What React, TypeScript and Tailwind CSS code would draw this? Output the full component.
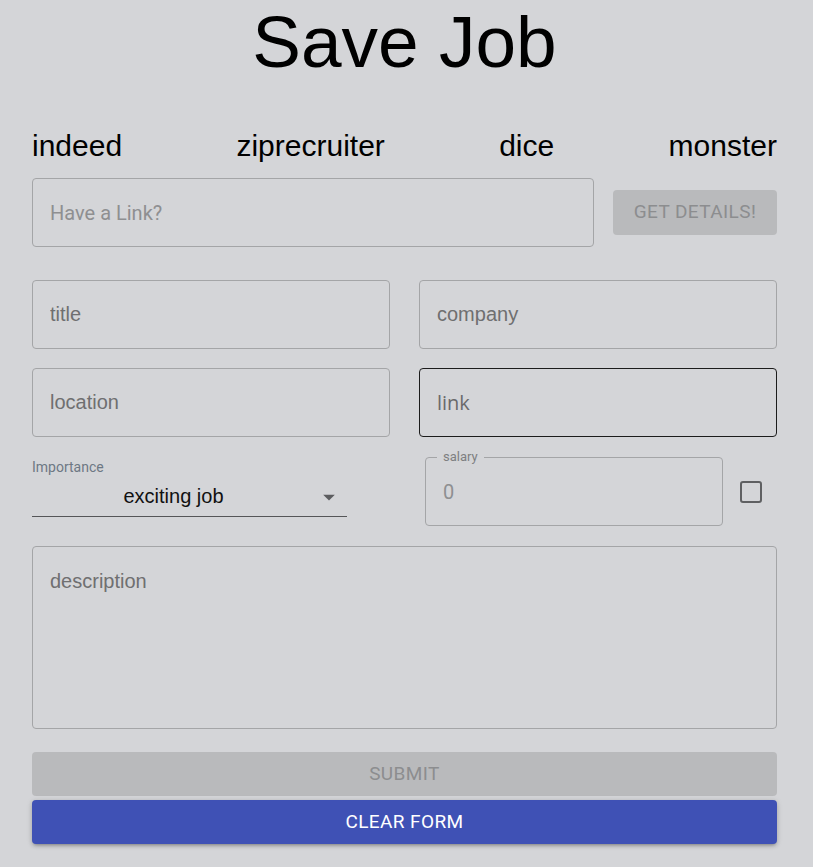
import React from "react";

const arial = "font-['Liberation_Sans',Arial,sans-serif]";
const roboto = "font-['Roboto','Liberation_Sans',sans-serif]";

const boxInput =
  "w-full h-[69px] rounded-[4px] border border-[#a4a5a7] bg-transparent px-[17px] text-[20px] text-[#222] outline-none placeholder:text-[#6f6f70]";

const App = () => {
  return (
    <div className={`min-h-[867px] w-full bg-[#d4d5d8] ${arial}`}>
      <div className="ml-[32px] w-[745px]">
        <h1 className="text-center text-[73px] font-normal leading-[83px] text-black">Save Job</h1>

        <div className="mt-[45px] flex justify-between text-[30px] leading-[35px] text-black">
          <span>indeed</span>
          <span>ziprecruiter</span>
          <span>dice</span>
          <span>monster</span>
        </div>

        <div className="mt-[15px] flex items-center gap-[19px]">
          <input
            className={`h-[69px] w-[562px] rounded-[4px] border border-[#a4a5a7] bg-transparent px-[17px] text-[20px] outline-none placeholder:text-[#8e8f91] ${roboto}`}
            placeholder="Have a Link?"
          />
          <button
            disabled
            className={`h-[45px] w-[164px] rounded-[4px] bg-[#b9babc] text-[19px] tracking-[0.4px] text-[#8c8d8f] ${roboto}`}
          >
            GET DETAILS!
          </button>
        </div>

        <div className="mt-[33px] grid grid-cols-[358px_358px] gap-x-[29px] gap-y-[19px]">
          <input className={boxInput} placeholder="title" />
          <input className={boxInput} placeholder="company" />
          <input className={boxInput} placeholder="location" />
          <input
            className="h-[69px] w-full rounded-[4px] border border-[#1c1c1c] bg-transparent px-[17px] text-[20px] font-['Open_Sans',sans-serif] outline-none placeholder:text-[#6a6a6b]"
            placeholder="link"
          />
        </div>

        <div className="mt-[20px] flex h-[69px] items-start">
          <div className="flex w-[315px] flex-col">
            <span className={`mt-[2px] text-[14px] leading-[16px] text-[#6d7884] ${roboto}`}>Importance</span>
            <div className="relative flex h-[42px] items-center border-b border-[#555658] pr-[32px]">
              <span className="flex-1 text-center text-[20px] text-[#111]">exciting job</span>
              <svg className="absolute right-[4px] top-[8px]" width="28" height="28" viewBox="0 0 24 24">
                <path d="M7 10l5 5 5-5z" fill="#5c5d5f" />
              </svg>
            </div>
          </div>

          <div className="relative ml-[78px] h-[69px] w-[298px] rounded-[4px] border border-[#a4a5a7]">
            <span
              className={`absolute -top-[9px] left-[11px] bg-[#d4d5d8] px-[6px] text-[13px] leading-[16px] text-[#7e7f81] ${roboto}`}
            >
              salary
            </span>
            <input
              className={`h-full w-full bg-transparent px-[17px] text-[20px] outline-none placeholder:text-[#8e8f91] ${roboto}`}
              placeholder="0"
            />
          </div>

          <div className="ml-[17px] mt-[24px] h-[22px] w-[22px] rounded-[3px] border-[2.5px] border-[#5f6062]"></div>
        </div>

        <textarea
          className="mt-[20px] block h-[183px] w-full resize-none rounded-[4px] border border-[#a4a5a7] bg-transparent px-[17px] pt-[23px] text-[20px] leading-[23px] outline-none placeholder:text-[#6f6f70]"
          placeholder="description"
        />

        <button
          disabled
          className={`mt-[23px] block h-[44px] w-full rounded-[4px] bg-[#b9babc] text-[19px] tracking-[0.4px] text-[#8c8d8f] ${roboto}`}
        >
          SUBMIT
        </button>
        <button
          className={`mt-[4px] block h-[44px] w-full rounded-[4px] bg-[#3f51b5] text-[19px] tracking-[0.4px] text-white shadow-[0_3px_3px_-2px_rgba(0,0,0,0.2),0_2px_4px_0_rgba(0,0,0,0.14),0_1px_6px_0_rgba(0,0,0,0.12)] ${roboto}`}
        >
          CLEAR FORM
        </button>
      </div>
    </div>
  );
};

export default App;
